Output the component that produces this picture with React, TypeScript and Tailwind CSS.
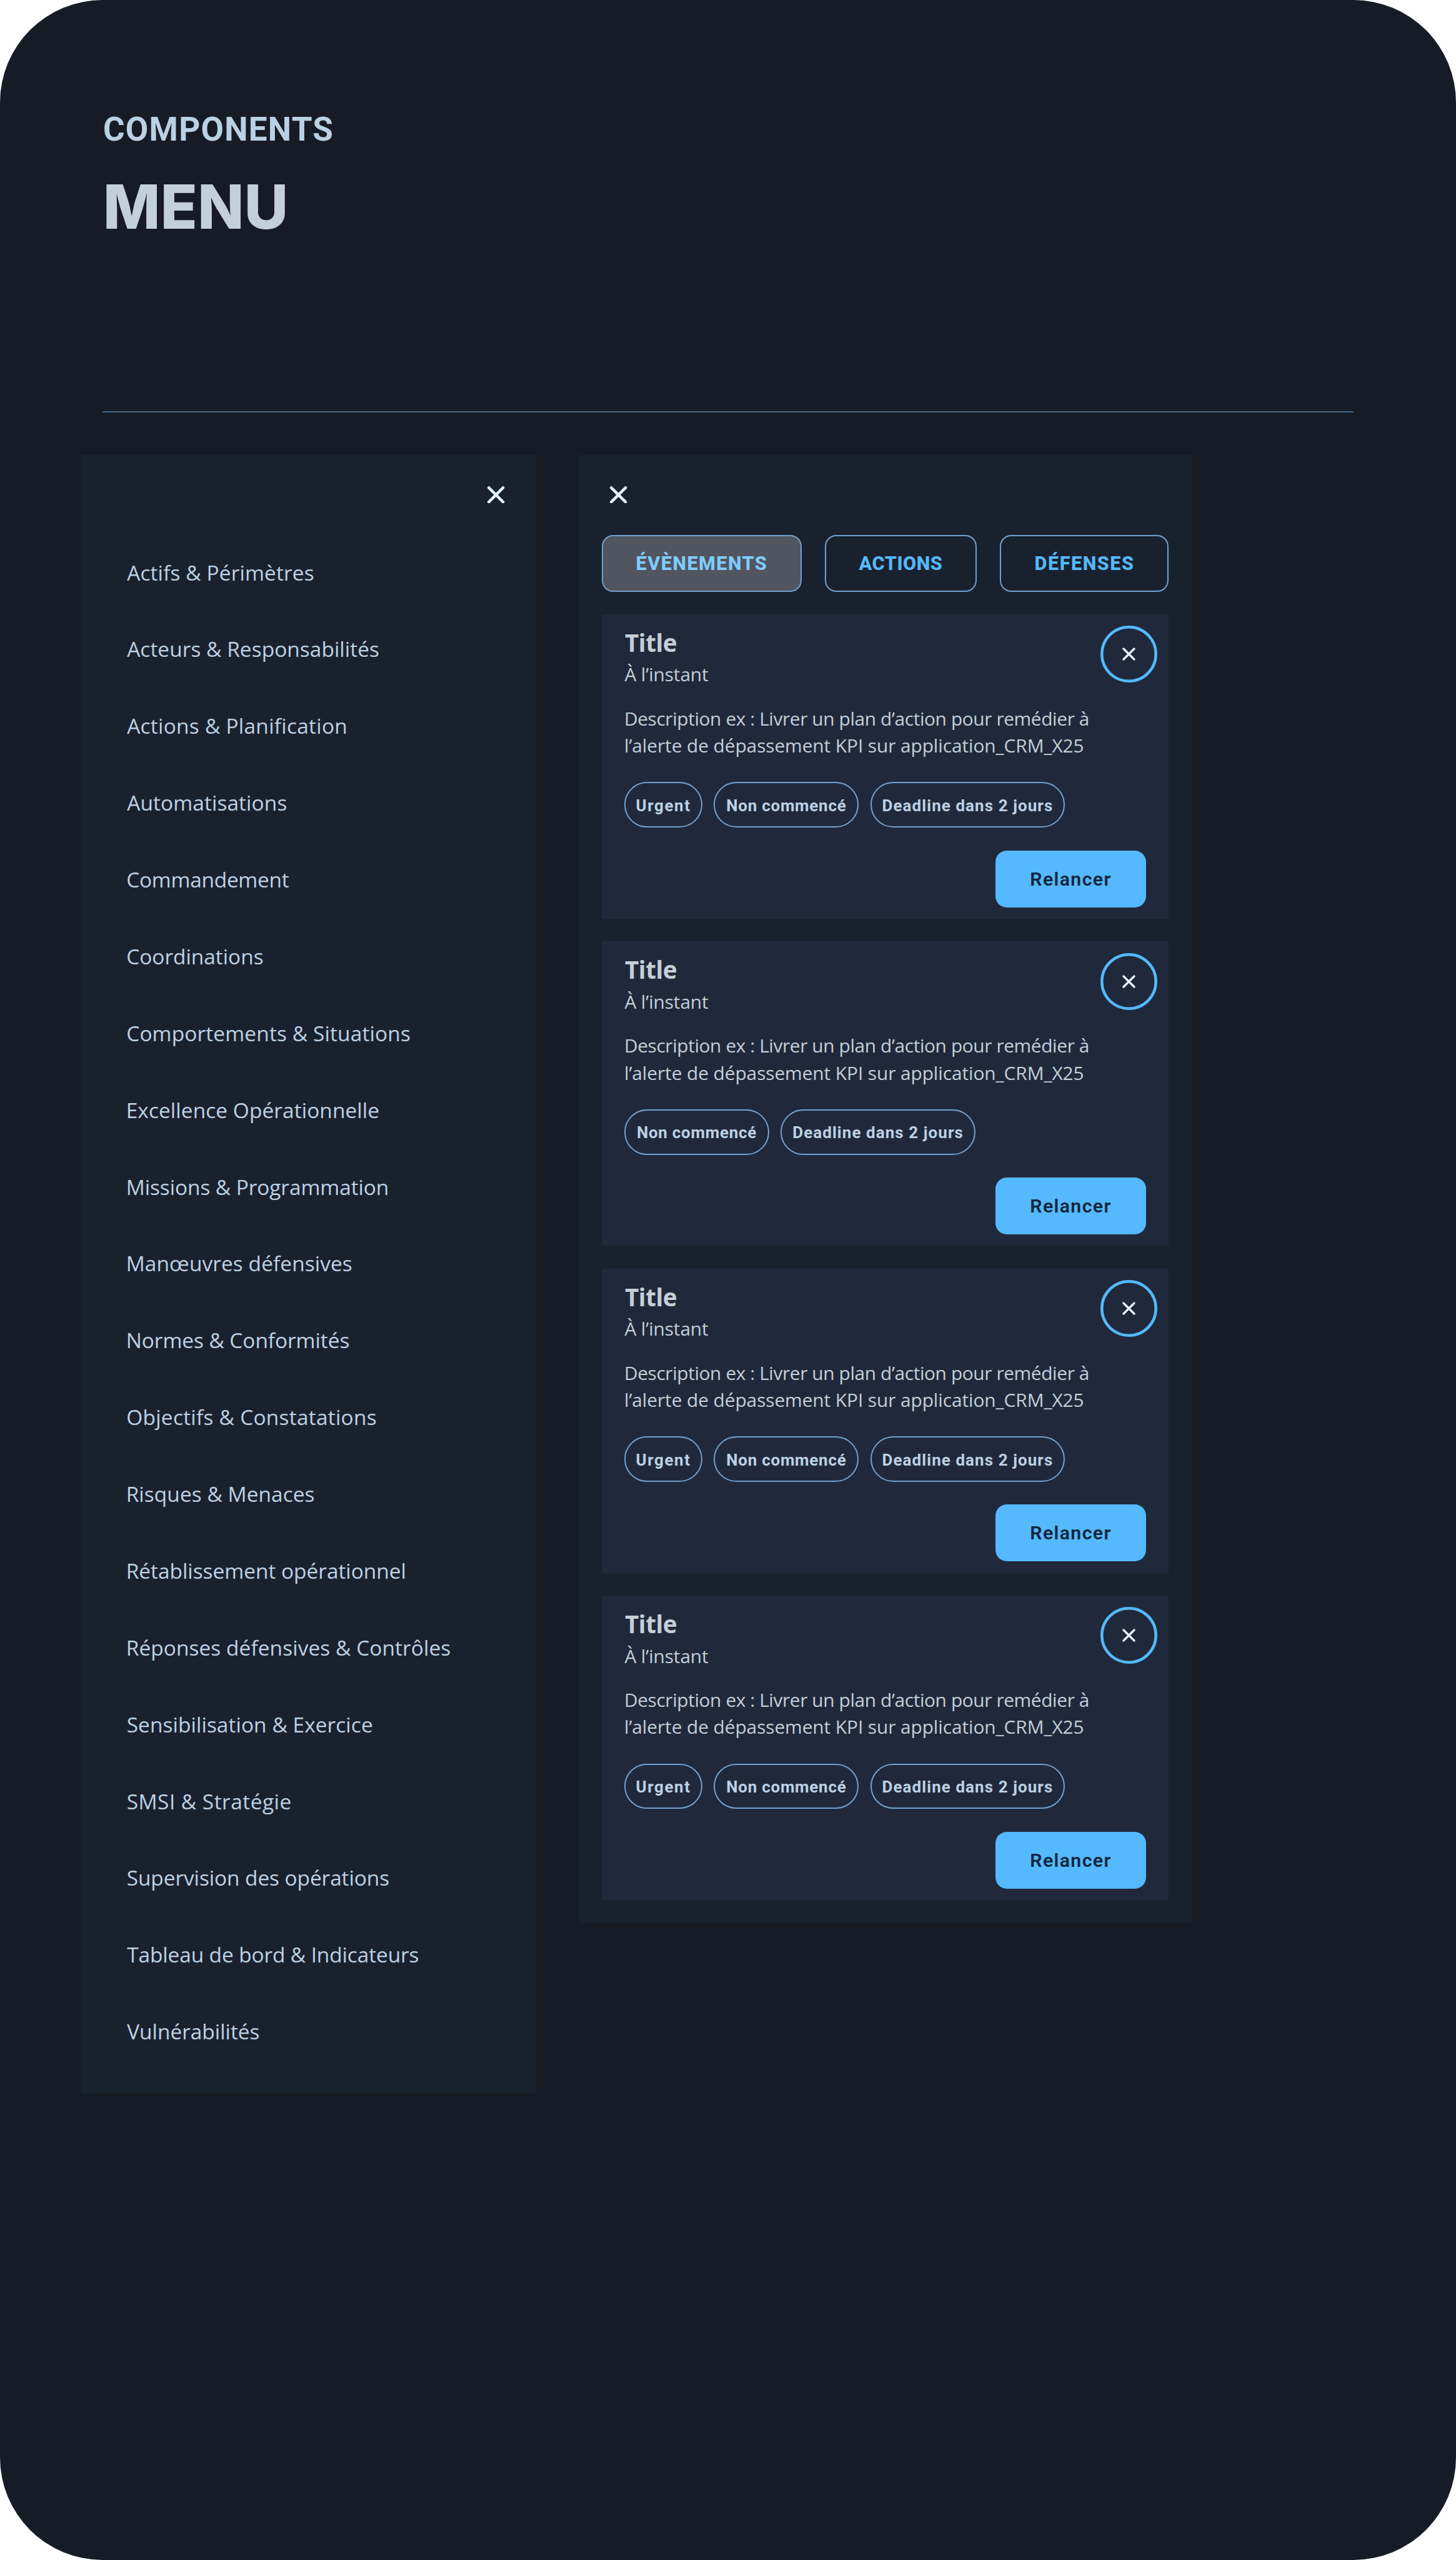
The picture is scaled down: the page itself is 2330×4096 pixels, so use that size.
const MENU_ITEMS = [
  { label: "Actifs & Périmètres", spacing: "pl-[73.5px] tracking-[0.08px]" },
  { label: "Acteurs & Responsabilités", spacing: "pl-[73.5px] tracking-[0px]" },
  { label: "Actions & Planification", spacing: "pl-[73.5px] tracking-[0.22px]" },
  { label: "Automatisations", spacing: "pl-[73.5px] tracking-[0.05px]" },
  { label: "Commandement", spacing: "pl-[72.5px] tracking-[-0.32px]" },
  { label: "Coordinations", spacing: "pl-[72.5px] tracking-[-0.07px]" },
  { label: "Comportements & Situations", spacing: "pl-[72.5px] tracking-[0.09px]" },
  { label: "Excellence Opérationnelle", spacing: "pl-[72px] tracking-[0.03px]" },
  { label: "Missions & Programmation", spacing: "pl-[72px] tracking-[-0.13px]" },
  { label: "Manœuvres défensives", spacing: "pl-[72px] tracking-[0.04px]" },
  { label: "Normes & Conformités", spacing: "pl-[72px] tracking-[-0.11px]" },
  { label: "Objectifs & Constatations", spacing: "pl-[72.5px] tracking-[0.22px]" },
  { label: "Risques & Menaces", spacing: "pl-[72px] tracking-[0.01px]" },
  { label: "Rétablissement opérationnel", spacing: "pl-[72px] tracking-[-0.06px]" },
  { label: "Réponses défensives & Contrôles", spacing: "pl-[72px] tracking-[0.03px]" },
  { label: "Sensibilisation & Exercice", spacing: "pl-[73px] tracking-[0.02px]" },
  { label: "SMSI & Stratégie", spacing: "pl-[73px] tracking-[0.45px]" },
  { label: "Supervision des opérations", spacing: "pl-[73px] tracking-[-0.13px]" },
  { label: "Tableau de bord & Indicateurs", spacing: "pl-[73.5px] tracking-[-0.16px]" },
  { label: "Vulnérabilités", spacing: "pl-[73.5px] tracking-[-0.07px]" },
];

const TABS = [
  { label: "ÉVÈNEMENTS", look: "w-[320.8px] tracking-[1.4px] bg-[#51555f] text-[#7eccff]" },
  { label: "ACTIONS", look: "w-[243.5px] tracking-[0.5px] text-[#54b9fe]" },
  { label: "DÉFENSES", look: "w-[270.8px] pl-[1px] tracking-[1.48px] text-[#54b9fe]" },
];

const URGENT = { label: "Urgent", look: "w-[125.2px] tracking-[1.6px]" };
const NOT_STARTED = { label: "Non commencé", look: "w-[232.1px] tracking-[0.72px]" };
const DEADLINE = { label: "Deadline dans 2 jours", look: "w-[311.7px] tracking-[1.06px]" };

const CARDS = [
  [URGENT, NOT_STARTED, DEADLINE],
  [NOT_STARTED, DEADLINE],
  [URGENT, NOT_STARTED, DEADLINE],
  [URGENT, NOT_STARTED, DEADLINE],
];

function CloseIcon() {
  return (
    <svg viewBox="0 0 48 48" className="block size-[27.3px]" fill="none" stroke="#e3f4ff" strokeWidth="8" strokeLinecap="round">
      <path d="M4 4 44 44M44 4 4 44" />
    </svg>
  );
}

function RoundCloseIcon() {
  return (
    <svg viewBox="0 0 160 160" className="block size-[91px]" fill="none">
      <circle cx="80" cy="80" r="76" stroke="#54b9fe" strokeWidth="8" />
      <path d="M65 65 95 95M95 65 65 95" stroke="#e3f4ff" strokeWidth="6" strokeLinecap="round" />
    </svg>
  );
}

function Card({ chips }: { chips: { label: string; look: string }[] }) {
  return (
    <article className="relative flex h-[487px] flex-col bg-[#20293b] px-[36.4px] pt-[20.8px] text-[#c3cfd9]">
      <h2 className="ml-[1px] text-[38.7px] leading-[48px] font-bold tracking-[-0.5px]">Title</h2>
      <p className="mt-[5.6px] ml-[0.5px] text-[29.9px] leading-[43.2px] tracking-[-0.14px]">À l’instant</p>
      <p className="mt-[27.4px] text-[29.9px] leading-[43.2px] whitespace-nowrap">
        <span className="block tracking-[-0.41px]">Description ex : Livrer un plan d’action pour remédier à</span>
        <span className="block tracking-[-0.1px]">l’alerte de dépassement KPI sur application_CRM_X25</span>
      </p>
      <div className="mt-[37.1px] flex gap-[18.2px]">
        {chips.map((chip) => (
          <span
            key={chip.label}
            className={`flex h-[72.8px] items-center justify-center rounded-full border-2 border-[#72a1cf] pt-[2px] font-[Roboto,sans-serif] text-[26px] leading-none font-bold whitespace-nowrap text-[#bcd1e5] ${chip.look}`}
          >
            {chip.label}
          </span>
        ))}
      </div>
      <button className="mt-[36.4px] flex h-[91px] w-[241.2px] items-center justify-center self-end rounded-[18.2px] bg-[#54b9fe] pt-[1.5px] font-[Roboto,sans-serif] text-[30.4px] leading-none font-semibold tracking-[1.3px] text-[#13263c]">
        Relancer
      </button>
      <button className="absolute top-[18.2px] right-[18.2px]" aria-label="Fermer">
        <RoundCloseIcon />
      </button>
    </article>
  );
}

export default function App() {
  return (
    <div className="bg-white">
      <main className="flex h-[4096px] w-[2330px] flex-col rounded-[164px] bg-[#171b25] font-['Open_Sans',sans-serif]">
        <header className="h-[658px] pt-[175px] pl-[165px]">
          <p className="font-[Roboto,sans-serif] text-[53px] leading-[64px] font-bold tracking-[1.19px] text-[#bad0e4]">COMPONENTS</p>
          <h1 className="mt-[34px] font-[Inter,sans-serif] text-[97px] leading-[116px] font-extrabold tracking-[0.3px] text-[#c4d0d9]">MENU</h1>
        </header>
        <div className="mx-[163.8px] h-[2px] shrink-0 bg-[#4b6a89]" />

        <div className="mt-[68.1px] flex items-start gap-[68.3px] pl-[129.7px]">
          <nav className="flex h-[2621.4px] w-[728.2px] flex-col bg-[#1a212e]">
            <div className="flex h-[126.8px] shrink-0 justify-end pt-[50px] pr-[50.3px]">
              <CloseIcon />
            </div>
            <ul>
              {MENU_ITEMS.map((item) => (
                <li
                  key={item.label}
                  className={`flex h-[122.88px] items-center text-[33.5px] leading-none whitespace-nowrap text-[#bcd2e5] ${item.spacing}`}
                >
                  {item.label}
                </li>
              ))}
            </ul>
          </nav>

          <section className="flex h-[2348.5px] w-[980.7px] flex-col bg-[#1a212e] px-[36.4px]">
            <div className="h-[127.5px] shrink-0 pt-[50px] pl-[13.7px]">
              <CloseIcon />
            </div>
            <div className="flex gap-[36.4px]">
              {TABS.map((tab) => (
                <button
                  key={tab.label}
                  className={`flex h-[91px] items-center justify-center rounded-[18.2px] border-2 border-[#72a1cf] pt-[3px] font-[Roboto,sans-serif] text-[30.7px] leading-none font-extrabold ${tab.look}`}
                >
                  {tab.label}
                </button>
              ))}
            </div>
            <div className="mt-[36.4px] flex flex-col gap-[36.4px]">
              {CARDS.map((chips, i) => (
                <Card key={i} chips={chips} />
              ))}
            </div>
          </section>
        </div>
      </main>
    </div>
  );
}
